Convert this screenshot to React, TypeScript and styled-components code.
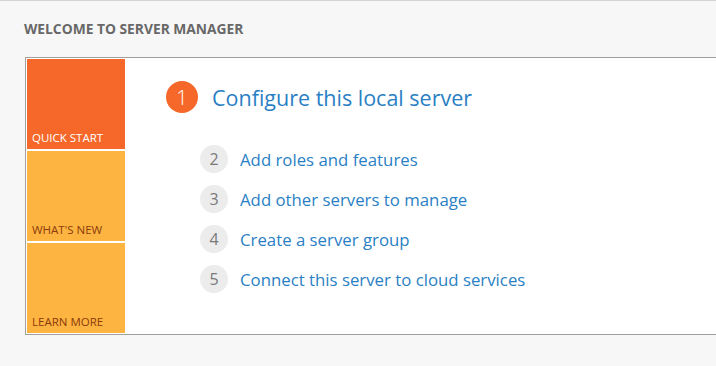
import styled, { createGlobalStyle } from "styled-components";

const Global = createGlobalStyle`
  html, body {
    margin: 0;
    padding: 0;
    background: #f7f7f7;
    overflow: hidden;
  }
  body {
    font-family: "Open Sans", "Noto Sans", sans-serif;
  }
`

const tiles = [
    { label: "QUICK START", active: true },
    { label: "WHAT'S NEW", active: false },
    { label: "LEARN MORE", active: false },
]

const steps = [
    { n: 2, text: "Add roles and features" },
    { n: 3, text: "Add other servers to manage" },
    { n: 4, text: "Create a server group" },
    { n: 5, text: "Connect this server to cloud services" },
]

export default () => {
    return (
        <Page>
            <Global />
            <Heading>WELCOME TO SERVER MANAGER</Heading>
            <Panel>
                <Tiles>
                    {tiles.map(t => (
                        <Tile key={t.label} $active={t.active}>{t.label}</Tile>
                    ))}
                </Tiles>
                <Content>
                    <MainStep>
                        <BigBadge>1</BigBadge>
                        <MainLink>Configure this local server</MainLink>
                    </MainStep>
                    <StepList>
                        {steps.map(s => (
                            <Step key={s.n}>
                                <Badge>{s.n}</Badge>
                                <StepLink>{s.text}</StepLink>
                            </Step>
                        ))}
                    </StepList>
                </Content>
            </Panel>
        </Page>
    )
}

const Page = styled.div`
  width: 716px;
  height: 366px;
  box-sizing: border-box;
  border-top: 1px solid #d4d4d4;
  background: #f7f7f7;
  overflow: hidden;
`

const Heading = styled.div`
  margin: 20px 0 0 24px;
  height: 16px;
  line-height: 16px;
  font-size: 13.8px;
  font-weight: 700;
  color: #686868;
`

const Panel = styled.div`
  display: flex;
  margin: 20px 0 0 25px;
  width: 720px;
  height: 278px;
  box-sizing: border-box;
  border: 1px solid #a0a0a0;
  background: #fff;
  padding: 1px 0 0 1px;
`

const Tiles = styled.div`
  display: flex;
  flex-direction: column;
  gap: 2px;
  width: 98px;
`

const Tile = styled.div<{ $active: boolean }>`
  height: 90px;
  box-sizing: border-box;
  display: flex;
  align-items: flex-end;
  padding: 0 0 4px 5px;
  font-size: 11.5px;
  line-height: 14px;
  background: ${p => p.$active ? "#f5682a" : "#feb441"};
  color: ${p => p.$active ? "#fff" : "#8a3b0c"};
`

const Content = styled.div`
  display: flex;
  flex-direction: column;
  padding: 22px 0 0 41px;
`

const MainStep = styled.div`
  display: flex;
  align-items: center;
  gap: 14px;
  height: 32px;
`

const BigBadge = styled.div`
  width: 32px;
  height: 32px;
  border-radius: 50%;
  background: #f5682a;
  color: #fff;
  display: flex;
  align-items: center;
  justify-content: center;
  font-size: 20px;
  font-weight: 300;
`

const MainLink = styled.div`
  font-size: 21.5px;
  color: #2a7fc4;
`

const StepList = styled.div`
  display: flex;
  flex-direction: column;
  gap: 12px;
  margin: 32px 0 0 34px;
`

const Step = styled.div`
  display: flex;
  align-items: center;
  gap: 12px;
  height: 28px;
`

const Badge = styled.div`
  width: 28px;
  height: 28px;
  border-radius: 50%;
  background: #ececec;
  color: #7a7a7a;
  display: flex;
  align-items: center;
  justify-content: center;
  font-size: 16px;
`

const StepLink = styled.div`
  font-size: 16.8px;
  color: #2a7fc4;
`
